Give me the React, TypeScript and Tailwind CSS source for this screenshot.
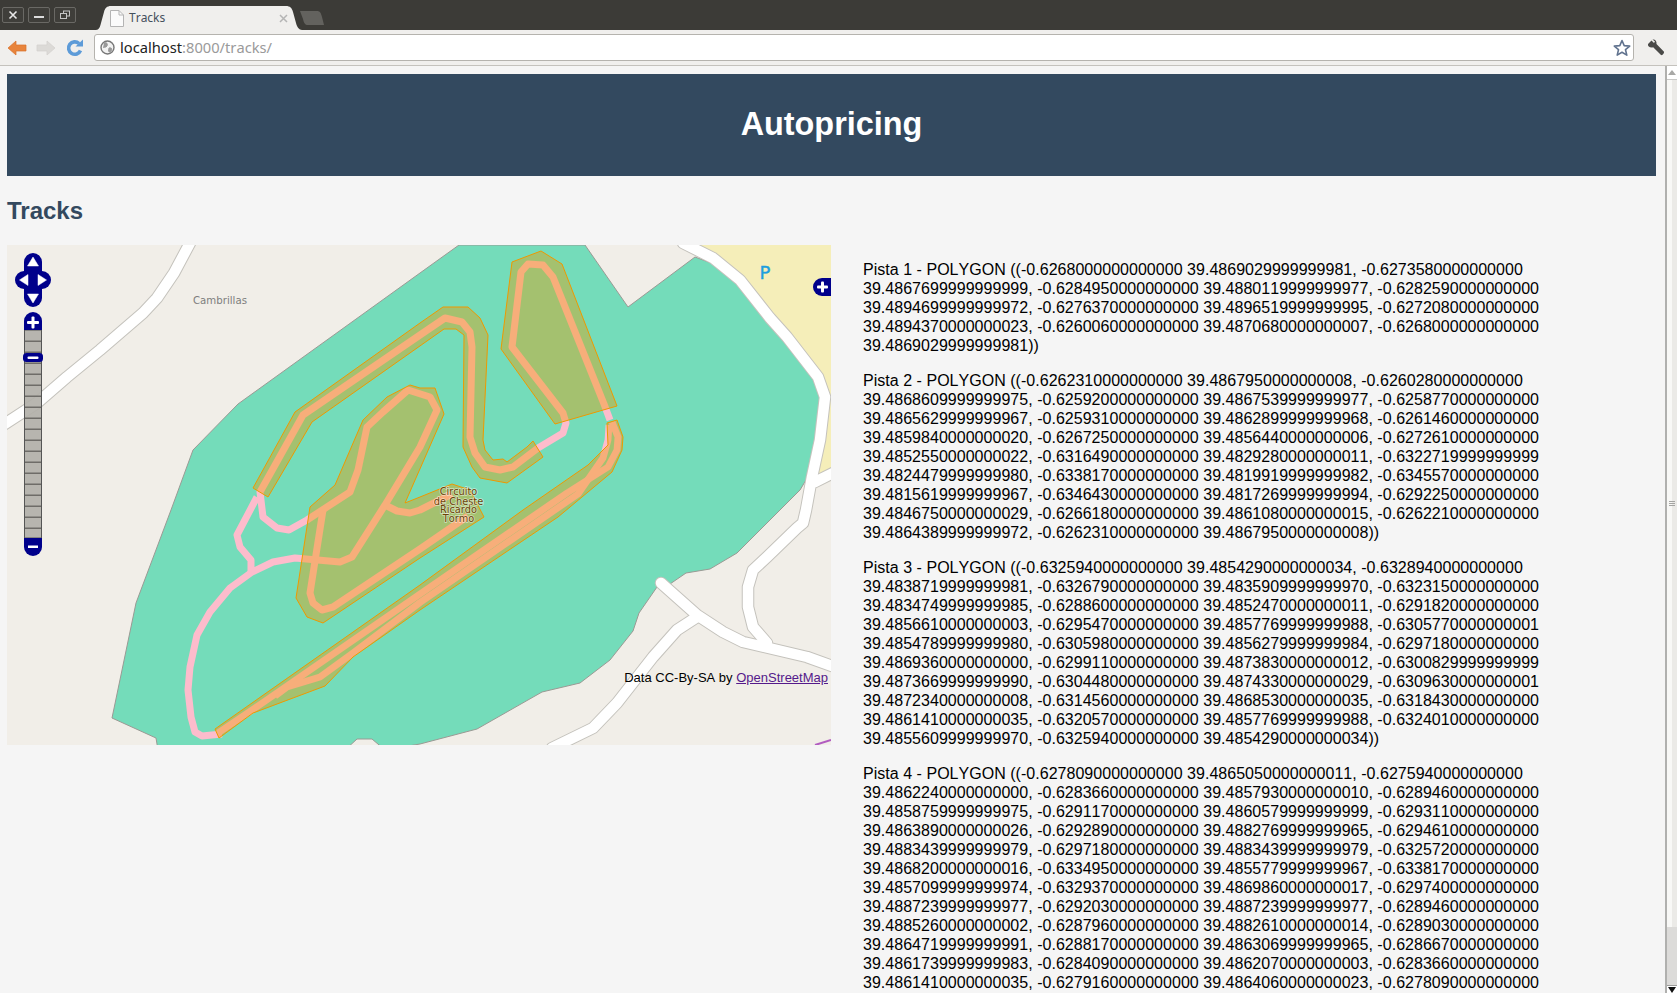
import React from "react";

const paragraphs = [
  "Pista 1 - POLYGON ((-0.6268000000000000 39.4869029999999981, -0.6273580000000000 39.4867699999999999, -0.6284950000000000 39.4880119999999977, -0.6282590000000000 39.4894699999999972, -0.6276370000000000 39.4896519999999995, -0.6272080000000000 39.4894370000000023, -0.6260060000000000 39.4870680000000007, -0.6268000000000000 39.4869029999999981))",
  "Pista 2 - POLYGON ((-0.6262310000000000 39.4867950000000008, -0.6260280000000000 39.4868609999999975, -0.6259200000000000 39.4867539999999977, -0.6258770000000000 39.4865629999999967, -0.6259310000000000 39.4862899999999968, -0.6261460000000000 39.4859840000000020, -0.6267250000000000 39.4856440000000006, -0.6272610000000000 39.4852550000000022, -0.6316490000000000 39.4829280000000011, -0.6322719999999999 39.4824479999999980, -0.6338170000000000 39.4819919999999982, -0.6345570000000000 39.4815619999999967, -0.6346430000000000 39.4817269999999994, -0.6292250000000000 39.4846750000000029, -0.6266180000000000 39.4861080000000015, -0.6262210000000000 39.4864389999999972, -0.6262310000000000 39.4867950000000008))",
  "Pista 3 - POLYGON ((-0.6325940000000000 39.4854290000000034, -0.6328940000000000 39.4838719999999981, -0.6326790000000000 39.4835909999999970, -0.6323150000000000 39.4834749999999985, -0.6288600000000000 39.4852470000000011, -0.6291820000000000 39.4856610000000003, -0.6295470000000000 39.4857769999999988, -0.6305770000000001 39.4854789999999980, -0.6305980000000000 39.4856279999999984, -0.6297180000000000 39.4869360000000000, -0.6299110000000000 39.4873830000000012, -0.6300829999999999 39.4873669999999990, -0.6304480000000000 39.4874330000000029, -0.6309630000000001 39.4872340000000008, -0.6314560000000000 39.4868530000000035, -0.6318430000000000 39.4861410000000035, -0.6320570000000000 39.4857769999999988, -0.6324010000000000 39.4855609999999970, -0.6325940000000000 39.4854290000000034))",
  "Pista 4 - POLYGON ((-0.6278090000000000 39.4865050000000011, -0.6275940000000000 39.4862240000000000, -0.6283660000000000 39.4857930000000010, -0.6289460000000000 39.4858759999999975, -0.6291170000000000 39.4860579999999999, -0.6293110000000000 39.4863890000000026, -0.6292890000000000 39.4882769999999965, -0.6294610000000000 39.4883439999999979, -0.6297180000000000 39.4883439999999979, -0.6325720000000000 39.4868200000000016, -0.6334950000000000 39.4855779999999967, -0.6338170000000000 39.4857099999999974, -0.6329370000000000 39.4869860000000017, -0.6297400000000000 39.4887239999999977, -0.6292030000000000 39.4887239999999977, -0.6289460000000000 39.4885260000000002, -0.6287960000000000 39.4882610000000014, -0.6289030000000000 39.4864719999999991, -0.6288170000000000 39.4863069999999965, -0.6286670000000000 39.4861739999999983, -0.6284090000000000 39.4862070000000003, -0.6283660000000000 39.4861410000000035, -0.6279160000000000 39.4864060000000023, -0.6278090000000000",
];

const Road = ({ d, w = 11 }: { d: string; w?: number }) => (
  <polyline points={d} fill="none" stroke="#c4c2bc" strokeWidth={w + 1.5} strokeLinejoin="round" strokeLinecap="round" />
);
const RoadTop = ({ d, w = 11 }: { d: string; w?: number }) => (
  <polyline points={d} fill="none" stroke="#ffffff" strokeWidth={w - 0.5} strokeLinejoin="round" strokeLinecap="round" />
);

const roads = [
  "190,243 174,273 157,298 143,313 100,350 67,377 37,403 0,427",
  "683,243 713,258 740,280 770,318 787,337 818,377 825,397 820,440 812,477 806,510 803,523 797,528 767,557 753,570 748,587 748,607 753,627 767,643",
  "661,583 697,615 723,632 743,642 807,657 835,667",
  "697,617 677,630 653,657 617,703 593,728 552,748",
  "815,482 835,472",
];

const pink = [
  "610,420 604,404 553,277 543,265 528,264 521,272 512,347 563,413 566,423 563,433 538,448 513,467 500,470 485,467 475,453 470,437 472,347 470,332 462,322 445,318 420,335 303,415 260,492 263,517 277,528 289,530 307,520 350,492 358,470 367,427 383,412 408,390 430,397 437,410 420,447 385,505 352,557 340,562 295,558 273,562 252,572 230,588 210,612 197,635 190,667 188,690 191,717 195,732 202,736 222,734",
  "257,497 237,535 240,547 251,560 251,572",
  "323,510 310,593 313,603 322,610 333,607 420,549 468,516",
  "385,505 397,511 410,513 420,510 452,494",
];

const track4 = [
  "218,733 258,706 420,594 567,493 608,467 617,450 618,437 612,422",
  "275,696 287,687 320,677 353,653 420,602.5 578,494 603,458 608,440 609,425",
];

const polys = [
  "512,262 541,251 562,264 617,406 555,424 501,349",
  "533,441 543,457 507,483 480,478 472,467 463,447 464,335 456,329 444,329 312,422 268,497 253,488 295,412 420,323 443,307 468,307 480,318 488,335 483,440 485,450 493,460 503,459 507,462 527,447",
  "310,507 335,485 363,420 387,397 410,385 420,388 435,388 444,414 405,503 420,497 452,484 470,490 484,517 420,558 323,623 307,617 296,598",
  "215,729 219,738 253,713 325,686 353,657 420,610 558,517 612,472 622,450 623,437 617,420 607,423 608,445 588,465 523,510 420,585",
];

const MapDrawing = () => (
  <svg viewBox="7 245 824 500" className="block h-full w-full">
    <rect x="7" y="245" width="824" height="500" fill="#f1eee8" />
    <polygon points="695,245 831,245 831,468 818,476 826,397 760,305" fill="#f5eeb9" />
    <polygon
      points="459,245 420,273 238,404 193,450 171,510 136,603 112,718 156,738 158,750 345,750 357,739 372,739 385,750 420,744 477,729 542,692 580,683 610,660 633,631 639,613 657,587 670,584 686,573 710,569 737,553 800,490 812,470 825,397 818,377 757,300 730,270 695,257 628,307 585,245"
      fill="#74dcba"
      stroke="#9a9a94"
      strokeWidth="1"
    />
    {roads.map((d) => (
      <Road key={d} d={d} />
    ))}
    {roads.map((d) => (
      <RoadTop key={d} d={d} />
    ))}
    <polyline points="815,745 831,740" fill="none" stroke="#b15cc0" strokeWidth="2" />
    {pink.map((d) => (
      <polyline key={d} points={d} fill="none" stroke="#fdbccc" strokeWidth="7" strokeLinejoin="round" />
    ))}
    {track4.map((d) => (
      <polyline key={d} points={d} fill="none" stroke="#fdbccc" strokeWidth="6.8" strokeLinejoin="round" />
    ))}
    {polys.map((d) => (
      <polygon key={d} points={d} fill="#ee9900" fillOpacity="0.4" stroke="#ee9900" strokeWidth="1" />
    ))}
    <text x="193" y="304" fontFamily="DejaVu Sans" fontSize="10.2" fill="#7e7e7e">
      Cambrillas
    </text>
    <text x="765" y="279" textAnchor="middle" fontFamily="DejaVu Sans" fontSize="18" fill="#1d9fdf" stroke="#1d9fdf" strokeWidth="0.4">
      P
    </text>
    {[
      ["Circuito", 495],
      ["de Cheste", 504.5],
      ["Ricardo", 513],
      ["Tormo", 522],
    ].map(([t, y]) => (
      <text
        key={t as string}
        x="458.5"
        y={y as number}
        textAnchor="middle"
        fontFamily="DejaVu Sans"
        fontSize="9.8"
        fill="#6b4305"
        stroke="#ffffff"
        strokeWidth="1.4"
        strokeOpacity="0.55"
        paintOrder="stroke"
      >
        {t}
      </text>
    ))}

    {/* pan control */}
    <g fill="#00008b">
      <rect x="24" y="253" width="18" height="36" rx="9" />
      <rect x="24" y="271" width="18" height="36" rx="9" />
      <rect x="15" y="271" width="18" height="18" rx="9" />
      <rect x="33" y="271" width="18" height="18" rx="9" />
    </g>
    <g fill="#ffffff" stroke="#ffffff" strokeWidth="0.5" strokeLinejoin="round">
      <polygon points="33,257 38.5,266 27.5,266" />
      <polygon points="33,303 38.5,294 27.5,294" />
      <polygon points="19.5,280 28,274.5 28,285.5" />
      <polygon points="46.5,280 38,274.5 38,285.5" />
    </g>

    {/* zoom bar */}
    <rect x="24.5" y="330" width="17" height="208" fill="#b2b0a9" fillOpacity="0.92" stroke="#555" strokeWidth="1" />
    {Array.from({ length: 19 }, (_, i) => (
      <rect key={i} x="25" y={340.5 + i * 11} width="16" height="1.5" fill="#6e6c68" />
    ))}
    <path d="M24 330 v-9 a9 9 0 0 1 18 0 v9 z" fill="#00008b" />
    <path d="M24 538 v9 a9 9 0 0 0 18 0 v-9 z" fill="#00008b" />
    <rect x="23" y="353" width="20" height="9" rx="3.5" fill="#00008b" />
    <rect x="27.5" y="356.5" width="11" height="2.5" rx="1" fill="#ffffff" />
    <rect x="28" y="545.5" width="10" height="2.5" fill="#ffffff" />
    <rect x="27" y="321" width="12" height="3" rx="1" fill="#ffffff" />
    <rect x="31.5" y="316.5" width="3" height="12" rx="1" fill="#ffffff" />

    {/* layer switcher */}
    <path d="M831 278 h-9 a9 9 0 0 0 0 18 h9 z" fill="#00008b" />
    <rect x="817" y="285.5" width="11" height="3" rx="1" fill="#ffffff" />
    <rect x="821" y="281.5" width="3" height="11" rx="1" fill="#ffffff" />
  </svg>
);

const WinBtn = ({ children }: { children: React.ReactNode }) => (
  <div className="flex h-[16px] w-[22px] items-center justify-center rounded-[2px] border border-[#6a6965] bg-[#3f3e3a]">
    {children}
  </div>
);

export default function App() {
  return (
    <div className="flex h-[993px] w-[1677px] flex-col overflow-hidden bg-[#f5f5f5] font-['Liberation_Sans',Arial,sans-serif] text-black [font-kerning:none]">
      {/* title bar */}
      <div className="flex h-[30px] shrink-0 items-start bg-[#3c3b37]">
        <div className="ml-[2px] mt-[7px] flex gap-[4px]">
          <WinBtn>
            <svg width="10" height="10" viewBox="0 0 10 10">
              <path d="M1.5 1.5 L8.5 8.5 M8.5 1.5 L1.5 8.5" stroke="#e8e8e8" strokeWidth="1.6" />
            </svg>
          </WinBtn>
          <WinBtn>
            <svg width="10" height="10" viewBox="0 0 10 10">
              <rect x="0" y="6" width="10" height="2" fill="#dcdcdc" />
            </svg>
          </WinBtn>
          <WinBtn>
            <svg width="10" height="10" viewBox="0 0 10 10" fill="none">
              <rect x="3.5" y="1" width="6" height="5" stroke="#c4c4c4" />
              <rect x="0.5" y="3.5" width="6" height="5" fill="#3f3e3a" stroke="#c4c4c4" />
            </svg>
          </WinBtn>
        </div>
        <div className="relative ml-[20px] mt-[6px] flex h-[24px] w-[206px] items-center pl-[14px]">
          <svg className="absolute inset-0" width="206" height="24" viewBox="0 0 206 24">
            <path d="M0 24 C3 24 4 21 5 17 L8 6 C9 2 11 0 15 0 H190 C194 0 196 2 197 6 L200 17 C201 21 203 24 206 24 Z" fill="#f0efed" />
          </svg>
          <svg className="relative mr-[5px]" width="14" height="17" viewBox="0 0 14 17">
            <path d="M0.5 0.5 H9 L13.5 5 V16.5 H0.5 Z" fill="#fbfbfb" stroke="#b4b4b4" />
            <path d="M9 0.5 V5 H13.5" fill="none" stroke="#b4b4b4" />
          </svg>
          <span className="relative font-['Noto_Sans',sans-serif] text-[12px] leading-none text-[#44505c]">Tracks</span>
          <svg className="absolute left-[183px] top-[8px]" width="9" height="9" viewBox="0 0 9 9">
            <path d="M1 1 L8 8 M8 1 L1 8" stroke="#b5b5b5" strokeWidth="1.5" />
          </svg>
        </div>
        <svg className="ml-[-3px] mt-[11px]" width="26" height="15" viewBox="0 0 26 15">
          <path d="M1 0 H18 C21 0 22 2 23 6 L25 14 H9 C6 14 5 12 4 8 Z" fill="#63625e" />
        </svg>
      </div>

      {/* toolbar */}
      <div className="flex h-[36px] shrink-0 items-center border-b border-[#c4c2bd] bg-[#f0efed]">
        <svg className="ml-[7px]" width="20" height="16" viewBox="0 0 20 16">
          <path d="M9 1 L1 8 L9 15 V11 H19 V5 H9 Z" fill="#e8843c" stroke="#d9702a" strokeWidth="0.7" strokeLinejoin="round" />
        </svg>
        <svg className="ml-[9px]" width="20" height="16" viewBox="0 0 20 16">
          <path d="M11 1 L19 8 L11 15 V11 H1 V5 H11 Z" fill="#dcdad7" stroke="#d2d0cd" strokeWidth="0.7" strokeLinejoin="round" />
        </svg>
        <svg className="ml-[10px]" width="18" height="18" viewBox="0 0 18 18">
          <path d="M14.5 11.5 A6.2 6.2 0 1 1 13 4.5" fill="none" stroke="#5d9bd8" strokeWidth="3.6" />
          <path d="M9.5 7.5 H17 V0.5 Z" fill="#5d9bd8" />
        </svg>
        <div className="ml-[10px] flex h-[27px] w-[1540px] items-center rounded-[3px] border border-[#b5b3ae] bg-white pl-[5px]">
          <svg width="15" height="15" viewBox="0 0 15 15">
            <circle cx="7.5" cy="7.5" r="6.5" fill="#f2f2f2" stroke="#777" strokeWidth="1.4" />
            <path d="M4 3 C7 2 8 4 7 6 C6 8 3.5 6.5 3 8 M9 8 C11 7.5 12.5 8.5 11.5 10.5 C10.5 12.5 9 12.5 8.5 11 Z" fill="#999" stroke="#999" />
          </svg>
          <span className="ml-[5px] font-['Noto_Sans',sans-serif] text-[14.7px] leading-none text-[#222]">
            localhost<span className="text-[#9a9a9a]">:8000/tracks/</span>
          </span>
          <svg className="ml-auto mr-[2px]" width="18" height="18" viewBox="0 0 18 18">
            <path d="M9 1.5 L11.2 6.6 L16.7 7.1 L12.5 10.7 L13.8 16.1 L9 13.3 L4.2 16.1 L5.5 10.7 L1.3 7.1 L6.8 6.6 Z" fill="#ffffff" stroke="#61738f" strokeWidth="1.6" strokeLinejoin="round" />
          </svg>
        </div>
        <svg className="ml-[13px]" width="18" height="18" viewBox="0 0 18 18">
          <path d="M1 5 L4.5 1.5 L7 4 L8 2.5 L5.5 0.5 C8 0 10 2 9.5 5 L17 12.8 C17.5 14 15.5 16.8 14 16 L6.2 8.3 C3 9 0.5 7.5 1 5 Z" fill="#4a4a48" />
        </svg>
      </div>

      {/* page + scrollbar */}
      <div className="flex min-h-0 flex-1">
        <main className="min-w-0 flex-1 overflow-hidden pl-[7px] pr-[9px] pt-[8px]">
          <header className="flex h-[102px] items-center justify-center bg-[#33495f] pb-[2px]">
            <h1 className="text-[32.4px] font-bold leading-none text-white">Autopricing</h1>
          </header>
          <h2 className="mt-[21px] text-[24px] font-bold leading-[28px] text-[#33495f] [font-kerning:normal]">Tracks</h2>
          <div className="mt-[20px] flex items-start">
            <div className="relative h-[500px] w-[824px] shrink-0 overflow-hidden">
              <MapDrawing />
              <div className="absolute bottom-[60px] right-[3px] text-[13px] leading-[15px] text-black">
                Data CC-By-SA by{" "}
                <a className="text-[#551a8b] underline" href="#">
                  OpenStreetMap
                </a>
              </div>
            </div>
            <div className="ml-[32px] w-[680px] shrink-0">
              {paragraphs.map((p) => (
                <p key={p} className="mt-[15px] mb-[16px] text-[16px] leading-[19px] tracking-[0.03px]">
                  {p}
                </p>
              ))}
            </div>
          </div>
        </main>
        <aside className="flex w-[12px] shrink-0 flex-col border-l-2 border-[#b0b0ae] bg-[#dcdbd9]">
          <div className="flex h-[14px] shrink-0 items-center justify-center border-b border-[#c8c8c6] bg-white">
            <svg width="8" height="5" viewBox="0 0 8 5">
              <path d="M4 0 L8 5 H0 Z" fill="#a8a8a6" />
            </svg>
          </div>
          <div className="flex h-[847px] shrink-0 flex-col items-center justify-center gap-[1px] bg-[linear-gradient(to_right,#f8f8f6_0%,#f8f8f6_50%,#ebeae7_50%,#ebeae7_100%)]">
            <div className="h-px w-[6px] bg-[#a5a5a3]" />
            <div className="h-px w-[6px] bg-[#a5a5a3]" />
            <div className="h-px w-[6px] bg-[#a5a5a3]" />
          </div>
          <div className="mt-auto flex h-[8px] shrink-0 items-end justify-center border-t border-[#9c9c9a] bg-white">
            <svg width="8" height="6" viewBox="0 0 8 6">
              <path d="M0 0 H8 L4 6 Z" fill="#111" />
            </svg>
          </div>
        </aside>
      </div>
    </div>
  );
}
